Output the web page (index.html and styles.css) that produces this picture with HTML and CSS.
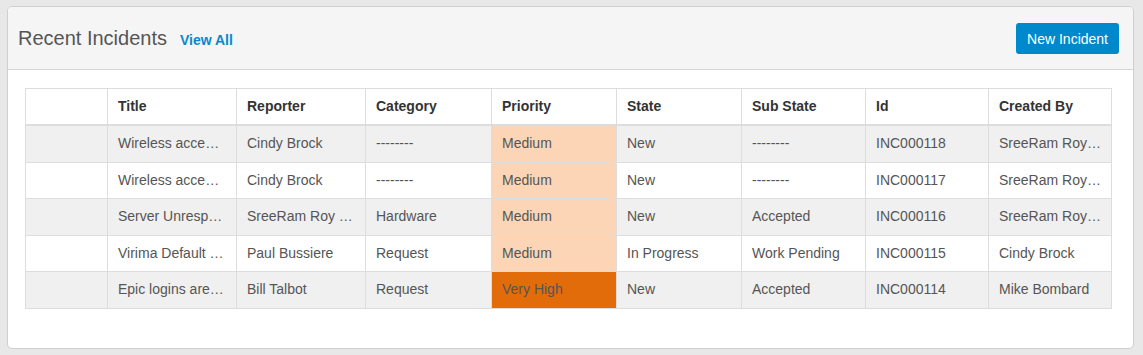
FILE: index.html
```html
<!DOCTYPE html>
<html>
<head>
	<title>Recent Incidents</title>
	<link rel="stylesheet" href="styles.css">
</head>
<body>
	<div class="panel">
		<div class="panel-heading">
			<div class="titulo">
				<h2>Recent Incidents</h2>
				<a href="#" class="ver-todo">View All</a>
			</div>
			<button class="boton">New Incident</button>
		</div>
		<div class="panel-body">
			<table class="tabla">
				<colgroup>
					<col style="width: 82px">
					<col style="width: 129px">
					<col style="width: 129px">
					<col style="width: 126px">
					<col style="width: 125px">
					<col style="width: 125px">
					<col style="width: 124px">
					<col style="width: 123px">
					<col style="width: 123px">
				</colgroup>
				<thead>
					<tr>
						<th></th>
						<th>Title</th>
						<th>Reporter</th>
						<th>Category</th>
						<th>Priority</th>
						<th>State</th>
						<th>Sub State</th>
						<th>Id</th>
						<th>Created By</th>
					</tr>
				</thead>
				<tbody>
					<tr>
						<td></td>
						<td>Wireless access point down</td>
						<td>Cindy Brock</td>
						<td>--------</td>
						<td class="medio">Medium</td>
						<td>New</td>
						<td>--------</td>
						<td>INC000118</td>
						<td>SreeRam Roy Chowdhury</td>
					</tr>
					<tr>
						<td></td>
						<td>Wireless access point down</td>
						<td>Cindy Brock</td>
						<td>--------</td>
						<td class="medio">Medium</td>
						<td>New</td>
						<td>--------</td>
						<td>INC000117</td>
						<td>SreeRam Roy Chowdhury</td>
					</tr>
					<tr>
						<td></td>
						<td>Server Unresponsive</td>
						<td>SreeRam Roy Chowdhury</td>
						<td>Hardware</td>
						<td class="medio">Medium</td>
						<td>New</td>
						<td>Accepted</td>
						<td>INC000116</td>
						<td>SreeRam Roy Chowdhury</td>
					</tr>
					<tr>
						<td></td>
						<td>Virima Default Dashboard</td>
						<td>Paul Bussiere</td>
						<td>Request</td>
						<td class="medio">Medium</td>
						<td>In Progress</td>
						<td>Work Pending</td>
						<td>INC000115</td>
						<td>Cindy Brock</td>
					</tr>
					<tr>
						<td></td>
						<td>Epic logins are failing</td>
						<td>Bill Talbot</td>
						<td>Request</td>
						<td class="alto">Very High</td>
						<td>New</td>
						<td>Accepted</td>
						<td>INC000114</td>
						<td>Mike Bombard</td>
					</tr>
				</tbody>
			</table>
		</div>
	</div>
</body>
</html>
```
FILE: styles.css
```css
body
{
	margin: 0;
	padding: 6px 9px 6px 7px;
	background-color: #e8e8e8;
	font-family: "Liberation Sans", Arial, sans-serif;
	font-size: 14px;
	color: #555;
}
.panel
{
	height: 341px;
	background-color: #fff;
	border: 1px solid #cfcfcf;
	border-radius: 5px;
	overflow: hidden;
}
.panel-heading
{
	height: 62px;
	display: flex;
	align-items: center;
	justify-content: space-between;
	padding: 0 14px 0 10px;
	background-color: #f5f5f5;
	border-bottom: 1px solid #d6d6d6;
}
.titulo
{
	display: flex;
	align-items: baseline;
	gap: 13px;
	margin-top: 1px;
}
.titulo h2
{
	margin: 0;
	font-size: 20px;
	font-weight: normal;
	color: #555;
}
.ver-todo
{
	color: #0a88cc;
	font-weight: bold;
	font-size: 14px;
	text-decoration: none;
}
.boton
{
	height: 31px;
	padding: 0 11px;
	margin-top: 1px;
	border: none;
	border-radius: 3px;
	background-color: #0088cc;
	color: #fff;
	font-family: "Liberation Sans", Arial, sans-serif;
	font-size: 14px;
}
.panel-body
{
	padding: 18px 22px 0 17px;
}
.tabla
{
	width: 1086px;
	border-collapse: collapse;
	table-layout: fixed;
	text-align: left;
}
.tabla th,
.tabla td
{
	padding: 8px 10px;
	line-height: 19.6px;
	border: 1px solid #dddddd;
	white-space: nowrap;
	overflow: hidden;
	text-overflow: ellipsis;
}
.tabla th
{
	line-height: 19px;
	color: #333;
	font-weight: bold;
	border-bottom-width: 2px;
}
.tabla tbody tr:nth-child(odd)
{
	background-color: #f0f0f0;
}
.tabla td.medio
{
	background-color: #fbd5b5;
}
.tabla td.alto
{
	background-color: #e36c0a;
}
```
